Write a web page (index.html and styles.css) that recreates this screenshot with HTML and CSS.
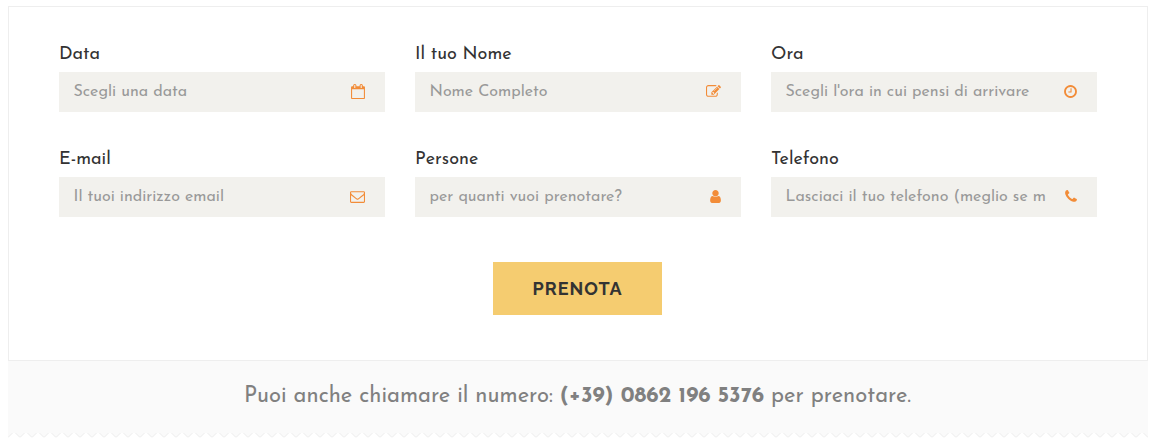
FILE: index.html
```html
<!DOCTYPE html>
<html lang="it">
  <head>
    <meta charset="UTF-8" />
    <meta name="viewport" content="width=device-width, initial-scale=1.0" />
    <title>Prenota</title>
    <link rel="stylesheet" href="styles.css">
  </head>
  <body>
    <form class="booking">
      <div class="fields">
        <div class="field">
          <label for="data">Data</label>
          <div class="control">
            <input id="data" type="text" placeholder="Scegli una data" />
            <svg class="icon" width="14" height="15" viewBox="0 0 1664 1792"><path d="M128 1664h1408v-1024h-1408v1024zm384-1216v-288q0-14-9-23t-23-9h-64q-14 0-23 9t-9 23v288q0 14 9 23t23 9h64q14 0 23-9t9-23zm768 0v-288q0-14-9-23t-23-9h-64q-14 0-23 9t-9 23v288q0 14 9 23t23 9h64q14 0 23-9t9-23zm384-64v1280q0 52-38 90t-90 38h-1408q-52 0-90-38t-38-90v-1280q0-52 38-90t90-38h128v-96q0-66 47-113t113-47h64q66 0 113 47t47 113v96h384v-96q0-66 47-113t113-47h64q66 0 113 47t47 113v96h128q52 0 90 38t38 90z"/></svg>
          </div>
        </div>
        <div class="field">
          <label for="nome">Il tuo Nome</label>
          <div class="control">
            <input id="nome" type="text" placeholder="Nome Completo" />
            <svg class="icon" width="15" height="15" viewBox="0 0 1792 1792"><path d="M888 1184l116-116-152-152-116 116v56h96v96h56zm440-720q-16-16-33 1l-350 350q-17 17-1 33t33-1l350-350q17-17 1-33zm80 594v190q0 119-84.500 203.500t-203.500 84.500h-832q-119 0-203.500-84.500t-84.500-203.500v-832q0-119 84.500-203.500t203.500-84.500h832q63 0 117 25 15 7 18 23 3 17-9 29l-49 49q-14 14-32 8-23-6-45-6h-832q-66 0-113 47t-47 113v832q0 66 47 113t113 47h832q66 0 113-47t47-113v-126q0-13 9-22l64-64q15-15 35-7t20 29zm-96-738l288 288-672 672h-288v-288zm444 132l-92 92-288-288 92-92q28-28 68-28t68 28l152 152q28 28 28 68t-28 68z"/></svg>
          </div>
        </div>
        <div class="field">
          <label for="ora">Ora</label>
          <div class="control">
            <input id="ora" type="text" placeholder="Scegli l'ora in cui pensi di arrivare" />
            <svg class="icon" width="13" height="15" viewBox="128 0 1536 1792"><path d="M1024 544v448q0 14-9 23t-23 9h-320q-14 0-23-9t-9-23v-64q0-14 9-23t23-9h224v-352q0-14 9-23t23-9h64q14 0 23 9t9 23zm416 352q0-148-73-273t-198-198-273-73-273 73-198 198-73 273 73 273 198 198 273 73 273-73 198-198 73-273zm224 0q0 209-103 385.500t-279.500 279.500-385.500 103-385.500-103-279.500-279.500-103-385.500 103-385.500 279.500-279.500 385.500-103 385.500 103 279.500 279.500 103 385.500z"/></svg>
          </div>
        </div>
        <div class="field">
          <label for="email">E-mail</label>
          <div class="control">
            <input id="email" type="text" placeholder="Il tuoi indirizzo email" />
            <svg class="icon" width="15" height="15" viewBox="0 0 1792 1792"><path d="M1664 1504v-768q-32 36-69 66-268 206-426 338-51 43-83 67t-86.500 48.500-102.500 24.500h-2q-48 0-102.500-24.500t-86.500-48.500-83-67q-158-132-426-338-37-30-69-66v768q0 13 9.500 22.500t22.500 9.500h1472q13 0 22.500-9.500t9.500-22.500zm0-1051v-24.500l-.5-13-3-12.500-5.500-9-9-7.500-14-2.500h-1472q-13 0-22.500 9.500t-9.500 22.500q0 168 147 284 193 152 401 317 6 5 35 29.500t46 37.500 44.500 31.500 50.500 27.500 43 9h2q20 0 43-9t50.500-27.500 44.500-31.500 46-37.500 35-29.500q208-165 401-317 54-43 100.500-115.500t46.500-131.500zm128-37v1088q0 66-47 113t-113 47h-1472q-66 0-113-47t-47-113v-1088q0-66 47-113t113-47h1472q66 0 113 47t47 113z"/></svg>
          </div>
        </div>
        <div class="field">
          <label for="persone">Persone</label>
          <div class="control">
            <input id="persone" type="text" placeholder="per quanti vuoi prenotare?" />
            <svg class="icon" width="11" height="15" viewBox="256 0 1280 1792"><path d="M1536 1399q0 109-62.500 187t-150.500 78h-854q-88 0-150.500-78t-62.500-187q0-85 8.500-160.500t31.500-152 58.500-131 94-89 134.500-34.500q131 128 313 128t313-128q76 0 134.500 34.500t94 89 58.500 131 31.500 152 8.500 160.500zm-256-887q0 159-112.500 271.500t-271.500 112.500-271.500-112.500-112.500-271.500 112.500-271.500 271.500-112.500 271.500 112.500 112.500 271.500z"/></svg>
          </div>
        </div>
        <div class="field">
          <label for="telefono">Telefono</label>
          <div class="control">
            <input id="telefono" type="text" placeholder="Lasciaci il tuo telefono (meglio se m" />
            <svg class="icon" width="12" height="15" viewBox="192 0 1408 1792"><path d="M1600 1240q0 27-10 70.500t-21 68.500q-21 50-122 106-94 51-186 51-27 0-53-3.500t-57.500-12.500-47-14.500-55.500-20.500-49-18q-98-35-175-83-127-79-264-216t-216-264q-48-77-83-175-3-9-18-49t-20.500-55.500-14.500-47-12.500-57.500-3.500-53q0-92 51-186 56-101 106-122 25-11 68.500-21t70.500-10q14 0 21 3 18 6 53 76 11 19 30 54t35 63.500 31 53.500q3 4 17.500 25t21.500 35.500 7 28.500q0 20-28.500 50t-62 55-62 53-28.500 46q0 9 5 22.500t8.500 20.500 14 24 11.500 19q76 137 174 235t235 174q2 1 19 11.500t24 14 20.500 8.500 22.500 5q18 0 46-28.500t53-62 55-62 50-28.500q14 0 28.500 7t35.500 21.500 25 17.500q25 15 53.500 31t63.500 35 54 30q70 35 76 53 3 7 3 21z"/></svg>
          </div>
        </div>
      </div>
      <div class="actions">
        <button type="button">PRENOTA</button>
      </div>
    </form>
    <div class="call">
      <p>Puoi anche chiamare il numero: <strong>(+39) 0862 196 5376</strong> per prenotare.</p>
    </div>
    <svg class="zigzag" width="1140" height="5">
      <defs>
        <pattern id="teeth" width="12" height="5" patternUnits="userSpaceOnUse">
          <path class="tooth" d="M0 0H12V4.500L8 0H4L0 4.500Z"/>
          <path class="edge" d="M0 4.500L4.500 0M12 4.500L7.500 0"/>
        </pattern>
      </defs>
      <rect width="1140" height="5" fill="url(#teeth)"/>
    </svg>
  </body>
</html>
```

FILE: styles.css
```css
* {
  margin: 0;
  padding: 0;
  box-sizing: border-box;
}
body {
  background: #fff;
  padding: 6px 12px 0 8px;
  font-family: "Josefin Sans", Lato, sans-serif;
}
.booking {
  height: 355px;
  border: 1px solid #eee;
  padding: 36px 50px 0;
}
.fields {
  display: grid;
  grid-template-columns: repeat(3, 1fr);
  gap: 36px 30px;
}
.field label {
  display: block;
  height: 24px;
  line-height: 24px;
  margin-bottom: 5px;
  font-size: 18px;
  color: #333;
  white-space: nowrap;
}
.control {
  display: flex;
  align-items: center;
  height: 40px;
  padding: 0 20px 0 14.5px;
  background: #f2f1ed;
}
.control input {
  flex: 1;
  min-width: 0;
  height: 40px;
  padding-bottom: 1px;
  border: 0;
  outline: 0;
  background: transparent;
  font-family: inherit;
  font-size: 16px;
  color: #333;
}
.control input::placeholder {
  color: #999;
}
.icon {
  flex: none;
  margin-bottom: 1px;
  fill: #f28c38;
}
.actions {
  display: flex;
  justify-content: center;
  padding-right: 1px;
  margin-top: 45px;
}
button {
  width: 169px;
  height: 53px;
  border: 0;
  background: #f5cc70;
  color: #333;
  font-family: Raleway, Lato, sans-serif;
  font-size: 18px;
  font-weight: 700;
  letter-spacing: 1px;
  cursor: pointer;
}
.call {
  height: 72px;
  background: #fafafa;
  text-align: center;
}
.call p {
  padding-right: 1px;
  line-height: 72px;
  font-size: 22px;
  color: #808080;
  white-space: nowrap;
}
.zigzag {
  display: block;
}
.tooth {
  fill: #fafafa;
}
.edge {
  fill: none;
  stroke: #ebebeb;
}
```
